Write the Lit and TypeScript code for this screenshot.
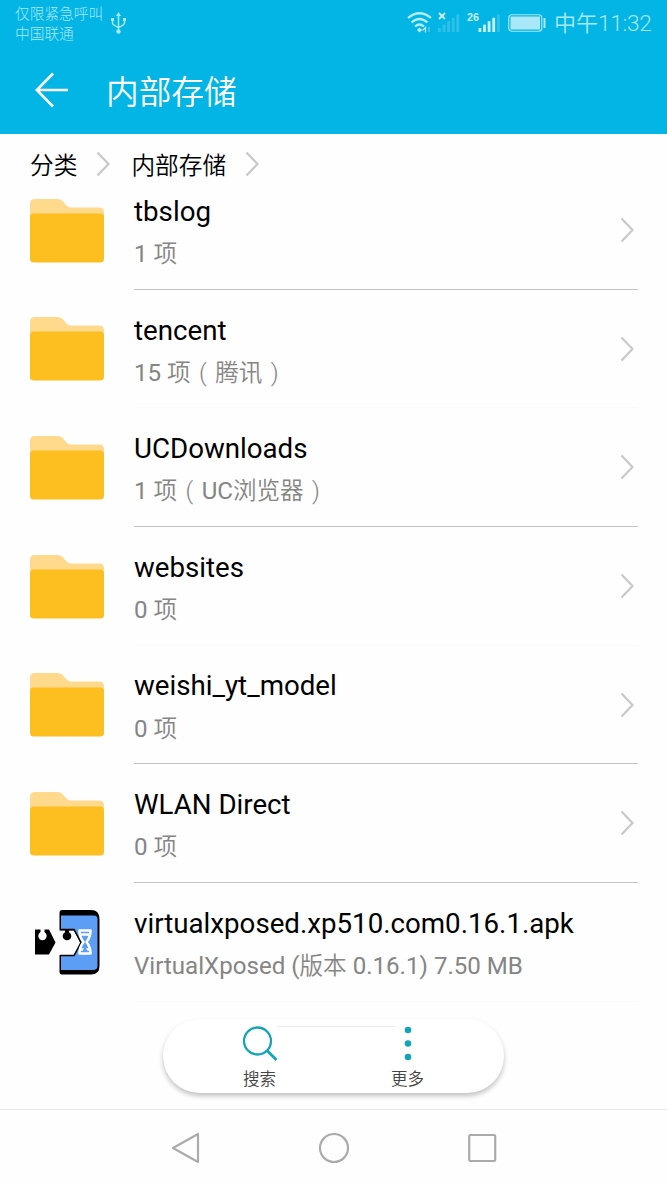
import { LitElement, html, css, svg, nothing } from "lit";
import { customElement, property } from "lit/decorators.js";

interface Entry {
  name: string;
  count?: number;
  app?: [latin: string, chinese: string];
  faint?: boolean;
}

const ENTRIES: Entry[] = [
  { name: "tbslog", count: 1 },
  { name: "tencent", count: 15, app: ["", "腾讯"], faint: true },
  { name: "UCDownloads", count: 1, app: ["UC", "浏览器"] },
  { name: "websites", count: 0, faint: true },
  { name: "weishi_yt_model", count: 0 },
  { name: "WLAN Direct", count: 0 },
  { name: "virtualxposed.xp510.com0.16.1.apk" },
];

const folderIcon = html`<svg width="74" height="64" viewBox="0 0 74 64">
  <path d="M0 30V5Q0 0 5 0H27Q31 0 33.500 3L36 6Q38 8.500 41 8.500H69Q74 8.500 74 13.500V30Z" fill="#ffd98c" />
  <path d="M0 18Q0 14.500 4 14.500H70Q74 14.500 74 18V60Q74 63.500 70 63.500H4Q0 63.500 0 60Z" fill="#fdbe1f" />
</svg>`;

const apkIcon = html`<svg width="74" height="66" viewBox="0 0 74 66">
  <path d="M29.500 3Q29.500 0 32 0H61Q69.500 0 69.500 9V56Q69.500 64.500 61 64.500H32Q29.500 64.500 29.500 62Z" fill="#000" />
  <path d="M31 5.500H64Q67.500 5.500 67.500 9V56Q67.500 60 63 60H31V45H44L50.500 33L44 20H31Z" fill="#5c9df5" />
  <path d="M28 20.500H44L50.500 33L44 45H28Z" fill="#fefefe" />
  <path d="M30.500 19.500H44L51 32.500L44 45.500H30.500" fill="none" stroke="#000" stroke-width="1.500" />
  <circle cx="37" cy="26" r="4.300" fill="#000" /><path d="M35 19h4v5h-4z" fill="#000" />
  <path d="M5 19.500H19L25.500 32.500L19 44.500H5Z" fill="#000" />
  <circle cx="12.500" cy="26" r="4.200" fill="#fff" /><path d="M10.500 19h4v7h-4z" fill="#fff" />
  <path d="M49.500 20.500H60.500Q60.500 27 56.500 32Q60.500 37 60.500 43.500H49.500Q49.500 37 53.500 32Q49.500 27 49.500 20.500ZM51.500 24.500H58.500M51.500 39.500H58.500" fill="none" stroke="#fff" stroke-width="2.600" stroke-linecap="round" stroke-linejoin="round" />
  <path d="M52.500 26H57.500L55 30Z" fill="#5c9df5" />
  <path d="M52.500 41L55 36L57.500 41Z" fill="#5c9df5" />
</svg>`;

const chevron = html`<svg width="14" height="26" viewBox="0 0 14 26">
  <path d="M1.500 1.500L12.500 13L1.500 24.500" fill="none" stroke="#c9c9c9" stroke-width="2.300" />
</svg>`;

const signalBars = (bright: number) => svg`${[0, 1, 2, 3, 4].map(
  (i) => svg`<rect x=${i * 4.6} y=${15 - i * 3.4} width="2.800" height=${4 + i * 3.4} fill="#c9f1fb" opacity=${i < bright ? 1 : 0.22} />`
)}`;

@customElement("status-bar")
class StatusBar extends LitElement {
  static styles = css`
    :host { display: flex; height: 46px; padding: 0 14px 0 15px; color: #a9e8f8; }
    .carrier { font-size: 14.700px; line-height: 20px; padding-top: 4px; font-weight: 300; white-space: nowrap; width: 95px; }
    .usb { margin-top: 12px; }
    .grow { flex: 1; }
    .wifi { margin: 11px 5px 0 0; }
    .sim { margin: 11px 6px 0 0; }
    .battery { margin: 14px 8px 0 0; }
    .tag { font: bold 11px "Liberation Sans", sans-serif; }
    .time { font-size: 22px; line-height: 47px; font-weight: 350; white-space: nowrap; width: 99px; }
    .clock { font-size: 22.700px; font-weight: 300; letter-spacing: -0.300px; }
  `;
  render() {
    return html`
      <div class="carrier"><div>仅限紧急呼叫</div><div>中国联通</div></div>
      <svg class="usb" width="17" height="22" viewBox="0 0 17 22" fill="none" stroke="#a9e8f8" stroke-width="1.500">
        <path d="M8.500 3V19M2.500 8V11Q2.500 13 8.500 15.500M14.500 8V11Q14.500 13 8.500 15.500" />
        <path d="M8.500 0L11 4H6ZM1 6h3v3h-3zM13 6h3v3h-3z" fill="#a9e8f8" stroke="none" />
        <circle cx="8.500" cy="19.500" r="2.200" fill="#a9e8f8" stroke="none" />
      </svg>
      <div class="grow"></div>
      <svg class="wifi" width="26" height="23" viewBox="0 0 26 23" fill="none" stroke="#b5edfa" stroke-width="2.200">
        <path d="M1 7Q12.500-2.500 24 7M4.500 11.500Q12.500 4.500 20.500 11.500M8 15.500Q12.500 11.500 17 15.500" />
        <path d="M10 19L12.500 16.500L15 19L12.500 21.500Z" fill="#c9f1fb" stroke="none" />
        <path d="M15.500 19.500l3-3v5" stroke-width="1.300" /><path d="M22 16v5" stroke-width="1.500" opacity="0.400" />
      </svg>
      <svg class="sim" width="23" height="23" viewBox="0 0 23 23">
        <path d="M1 2l6 6M7 2l-6 6" stroke="#c9f1fb" stroke-width="1.800" />
        <g transform="translate(0 2)">${signalBars(0)}</g>
      </svg>
      <svg class="sim" width="35" height="23" viewBox="0 0 35 23">
        <text class="tag" x="0" y="10" fill="#c9f1fb" textLength="12" lengthAdjust="spacingAndGlyphs">26</text>
        <g transform="translate(11.500 2)">${signalBars(4)}</g>
      </svg>
      <svg class="battery" width="38" height="18" viewBox="0 0 38 18">
        <rect x="0.750" y="0.750" width="33" height="16.500" rx="3" fill="none" stroke="#a9e8f8" stroke-width="1.200" />
        <rect x="2.500" y="2.500" width="29.500" height="13" fill="#a9e8f8" />
        <rect x="35.500" y="4" width="2" height="10" fill="#a9e8f8" />
      </svg>
      <div class="time">中午<span class="clock">11:32</span></div>
    `;
  }
}

@customElement("file-row")
class FileRow extends LitElement {
  @property({ attribute: false }) entry!: Entry;
  static styles = css`
    :host { display: flex; height: 118.650px; padding: 0 29.500px 0 30px; box-sizing: border-box; }
    .icon { width: 104px; padding-top: 27.500px; box-sizing: border-box; flex: none; }
    .icon svg, .more svg { display: block; }
    .body { flex: 1; display: flex; border-bottom: 1px solid #c4c4c4; box-sizing: border-box; white-space: nowrap; }
    .body.faint { border-color: #fafafa; }
    .text { flex: 1; padding-top: 22.800px; }
    .name { font-size: 27.700px; line-height: 36px; color: #000; }
    .info { font-size: 24.100px; line-height: 30px; margin-top: 9.200px; color: #858585; }
    .cjk { font-size: 23.600px; font-weight: 350; }
    .paren { display: inline-block; width: 24.500px; text-align: center; line-height: 20px; font-weight: 300; }
    .more { padding: 46px 4px 0 0; }
  `;
  render() {
    const { name, count, app, faint } = this.entry;
    const isFolder = count !== undefined;
    return html`
      <div class="icon">${isFolder ? folderIcon : apkIcon}</div>
      <div class="body ${faint || !isFolder ? "faint" : ""}">
        <div class="text">
          <div class="name">${name}</div>
          <div class="info">${isFolder
            ? html`${count} <span class="cjk">项</span>${app
                ? html`<span class="paren">(</span>${app[0]}<span class="cjk">${app[1]}</span><span class="paren">)</span>`
                : nothing}`
            : html`VirtualXposed (<span class="cjk">版本</span> 0.16.1) 7.50 MB`}</div>
        </div>
        ${isFolder ? html`<div class="more">${chevron}</div>` : nothing}
      </div>
    `;
  }
}

@customElement("app-root")
class AppRoot extends LitElement {
  static styles = css`
    :host { display: flex; flex-direction: column; height: 1186px; position: relative; overflow: hidden; background: #fefefe; font-family: Roboto, "Noto Sans CJK SC", sans-serif; }
    .head { height: 134px; background: #03b5e5; flex: none; }
    .bar { display: flex; align-items: center; height: 88px; padding-left: 35px; color: #fff; }
    .title { margin-left: 37px; padding-top: 5px; font-size: 32.700px; font-weight: 350; line-height: 44px; }
    .crumbs { display: flex; align-items: center; height: 60px; padding-left: 30px; font-size: 23.700px; font-weight: 350; color: #000; flex: none; }
    .crumbs svg { margin: 0 21px 0 19px; }
    .list { flex: 1; overflow: hidden; }
    .rows { margin-top: -22.900px; }
    .nav { height: 76px; border-top: 1px solid #e6e6e6; display: flex; justify-content: center; align-items: center; gap: 118px; flex: none; }
    .dock { position: absolute; left: 163px; top: 1019px; width: 341px; height: 74px; border-radius: 37px; background: #fff; box-shadow: 0 3px 5px rgba(0, 0, 0, 0.24); display: flex; justify-content: center; }
    .action { width: 148px; display: flex; flex-direction: column; align-items: center; padding-top: 6px; font-size: 16.500px; font-weight: 350; line-height: 22px; color: #444; box-sizing: border-box; }
    .action svg { display: block; margin-bottom: 8px; }
    .seam { position: absolute; left: 114px; top: 7px; width: 119px; height: 1px; background: #ececec; }
  `;
  render() {
    return html`
      <header class="head">
        <status-bar></status-bar>
        <div class="bar">
          <svg width="34" height="36" viewBox="0 0 34 36" fill="none" stroke="#fff" stroke-width="2.500">
            <path d="M18 1.500L1.800 18L18 34.500M1.800 18H33" />
          </svg>
          <div class="title">内部存储</div>
        </div>
      </header>
      <nav class="crumbs"><span>分类</span>${chevron}<span>内部存储</span>${chevron}</nav>
      <main class="list"><div class="rows">${ENTRIES.map((e) => html`<file-row .entry=${e}></file-row>`)}</div></main>
      <footer class="nav">
        <svg width="30" height="32" viewBox="0 0 30 32" fill="none" stroke="#ababab" stroke-width="2.200" stroke-linejoin="round">
          <path d="M28 2V30L3 16Z" />
        </svg>
        <svg width="32" height="32" viewBox="0 0 32 32" fill="none" stroke="#ababab" stroke-width="2.200"><circle cx="16" cy="16" r="14" /></svg>
        <svg width="30" height="32" viewBox="0 0 30 32" fill="none" stroke="#ababab" stroke-width="2.200"><rect x="1.200" y="3" width="26" height="26" rx="1" /></svg>
      </footer>
      <div class="dock">
        <div class="seam"></div>
        <div class="action">
          <svg width="36" height="36" viewBox="0 0 36 36" fill="none" stroke="#12a5b7" stroke-width="2.300">
            <circle cx="15.500" cy="16" r="13.500" /><path d="M25 25.500L34.500 35" stroke-width="2.800" />
          </svg>
          <span>搜索</span>
        </div>
        <div class="action">
          <svg width="36" height="36" viewBox="0 0 36 36" fill="#12a5b7">
            <circle cx="18" cy="5" r="3.300" /><circle cx="18" cy="18.500" r="3.300" /><circle cx="18" cy="32" r="3.300" />
          </svg>
          <span>更多</span>
        </div>
      </div>
    `;
  }
}
